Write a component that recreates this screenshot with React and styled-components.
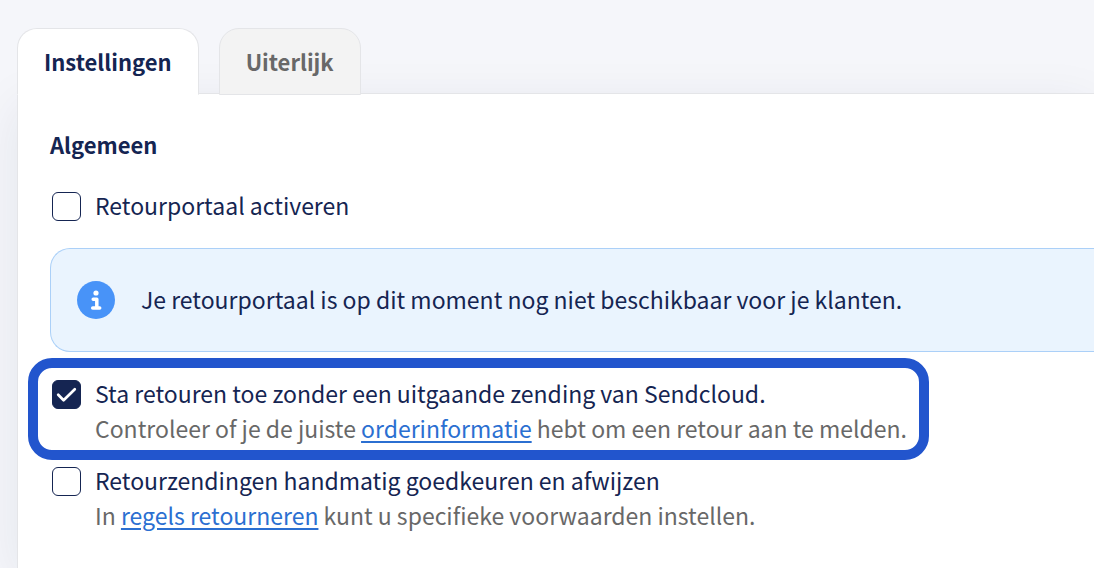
import React, { useState } from 'react';
import styled, { createGlobalStyle } from 'styled-components';

const COLORS = {
  navy: '#152552',
  grey: '#686868',
  link: '#2b6fd1',
  page: '#f5f6fa',
  line: '#e4e5e8',
  infoBg: '#eaf4fe',
  infoLine: '#abd0f8',
  infoIcon: '#4893f8',
  focus: '#2255cd',
};

const GlobalStyle = createGlobalStyle`
  * { box-sizing: border-box; }
  body {
    margin: 0;
    background: ${COLORS.page};
    color: ${COLORS.navy};
    font-family: "Source Sans Pro", "Noto Sans CJK SC", "Noto Sans", sans-serif;
    font-size: 23px;
    line-height: 35px;
  }
`;

const Page = styled.main`
  min-height: 100vh;
  padding: 28px 0 0 17px;
  display: flex;
  flex-direction: column;
  overflow: hidden;
`;

const TabList = styled.div`
  display: flex;
  gap: 20px;
  margin-bottom: -2px;
  z-index: 1;
`;

const Tab = styled.button`
  padding: 15px 26px;
  border: 1px solid ${COLORS.line};
  border-bottom-color: ${p => (p.$active ? '#fff' : COLORS.line)};
  border-radius: 20px 20px 0 0;
  background: ${p => (p.$active ? '#fff' : '#f3f3f3')};
  color: ${p => (p.$active ? COLORS.navy : COLORS.grey)};
  font: inherit;
  font-size: 22px;
  font-weight: 600;
  cursor: pointer;
`;

const Panel = styled.section`
  flex: 1;
  padding: 33px 0 32px 32px;
  border: solid ${COLORS.line};
  border-width: 1px 0 0 1px;
  background: #fff;
  box-shadow: 0 12px 48px rgba(20, 36, 79, 0.08);
`;

const Heading = styled.h2`
  margin: 0 0 26px;
  font-size: 22px;
  font-weight: 600;
`;

const Option = styled.div`
  display: flex;
  gap: 14px;
  padding-left: 2px;
`;

const Checkbox = styled.span`
  display: grid;
  flex: none;
  width: 29px;
  height: 29px;
  margin-top: 4px;

  input, svg { grid-area: 1 / 1; }
  input {
    appearance: none;
    width: 29px;
    height: 29px;
    margin: 0;
    border: 1px solid ${COLORS.navy};
    border-radius: 6px;
    background: #fff;
    cursor: pointer;
  }
  input:checked { background: ${COLORS.navy}; }
  svg { pointer-events: none; visibility: hidden; }
  input:checked + svg { visibility: visible; }
`;

const Label = styled.label`
  display: block;
  cursor: pointer;
`;

const Help = styled.p`
  margin: 0;
  color: ${COLORS.grey};
`;

const Link = styled.a`
  color: ${COLORS.link};
  text-decoration: underline;
  text-decoration-thickness: 2px;
  text-underline-offset: 3px;
`;

const Alert = styled.div`
  display: flex;
  align-items: center;
  gap: 26px;
  margin: 25px 0 6px;
  padding: 32px 26px;
  border: 1px solid ${COLORS.infoLine};
  border-right: 0;
  border-radius: 20px 0 0 20px;
  background: ${COLORS.infoBg};

  svg { flex: none; }
  p { margin: 0; padding-bottom: 1px; }
`;

const Highlight = styled.div`
  width: fit-content;
  margin: 0 0 3px -22px;
  padding: 8px 12px 4px 12px;
  border: 10px solid ${COLORS.focus};
  border-radius: 24px;
`;

function InfoIcon() {
  return (
    <svg width="38" height="38" viewBox="0 0 38 38" aria-hidden="true">
      <circle cx="19" cy="19" r="19" fill={COLORS.infoIcon} />
      <circle cx="19" cy="12" r="2.6" fill="#fff" />
      <path
        d="M16.2 18.2h3.6v8.6M15.7 27h7"
        fill="none"
        stroke="#fff"
        strokeWidth="3.5"
        strokeLinecap="round"
        strokeLinejoin="round"
      />
    </svg>
  );
}

function CheckOption({ id, label, defaultChecked = false, children }) {
  const [checked, setChecked] = useState(defaultChecked);

  return (
    <Option>
      <Checkbox>
        <input
          id={id}
          type="checkbox"
          checked={checked}
          onChange={e => setChecked(e.target.checked)}
        />
        <svg width="29" height="29" viewBox="0 0 29 29" aria-hidden="true">
          <path
            d="M6.2 14.8l5.4 5.4L22.8 9.2"
            fill="none"
            stroke="#fff"
            strokeWidth="2.7"
            strokeLinecap="round"
            strokeLinejoin="round"
          />
        </svg>
      </Checkbox>
      <div>
        <Label htmlFor={id}>{label}</Label>
        {children && <Help>{children}</Help>}
      </div>
    </Option>
  );
}

const TABS = ['Instellingen', 'Uiterlijk'];

export default function App() {
  const [tab, setTab] = useState(TABS[0]);

  return (
    <Page>
      <GlobalStyle />
      <TabList role="tablist">
        {TABS.map(name => (
          <Tab
            key={name}
            type="button"
            role="tab"
            aria-selected={tab === name}
            $active={tab === name}
            onClick={() => setTab(name)}
          >
            {name}
          </Tab>
        ))}
      </TabList>
      <Panel>
        <Heading>Algemeen</Heading>
        <CheckOption id="portal" label="Retourportaal activeren" />
        <Alert>
          <InfoIcon />
          <p>Je retourportaal is op dit moment nog niet beschikbaar voor je klanten.</p>
        </Alert>
        <Highlight>
          <CheckOption
            id="without-shipment"
            label="Sta retouren toe zonder een uitgaande zending van Sendcloud."
            defaultChecked
          >
            Controleer of je de juiste <Link href="#orderinformatie">orderinformatie</Link> hebt om een retour aan te melden.
          </CheckOption>
        </Highlight>
        <CheckOption id="manual" label="Retourzendingen handmatig goedkeuren en afwijzen">
          In <Link href="#regels">regels retourneren</Link> kunt u specifieke voorwaarden instellen.
        </CheckOption>
      </Panel>
    </Page>
  );
}
